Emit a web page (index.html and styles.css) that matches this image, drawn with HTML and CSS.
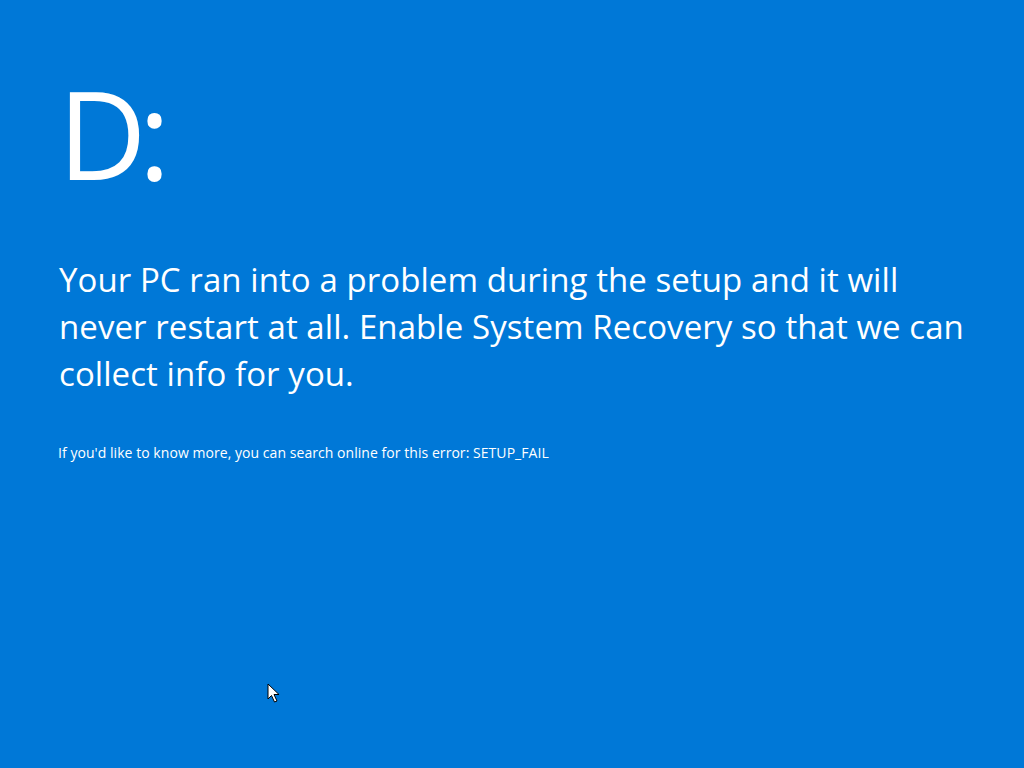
FILE: index.html
```html
<!DOCTYPE html>
<html>
<head>
<meta charset="utf-8">
<link rel="stylesheet" href="styles.css">
</head>
<body>
<main class="screen">
  <div class="face">D:</div>
  <p class="message">Your PC ran into a problem during the setup and it will never restart at all. Enable System Recovery so that we can collect info for you.</p>
  <p class="info">If you'd like to know more, you can search online for this error: SETUP_FAIL</p>
</main>
<svg class="cursor" width="14" height="20" viewBox="0 0 14 20"><path d="M1 1 L1 16 L4.5 12.5 L7.5 19 L10 18 L7 11.5 L12 11.5 Z" fill="#fff" stroke="#000" stroke-width="1" stroke-linejoin="round"/></svg>
</body>
</html>
```
FILE: styles.css
```css
html, body {
  margin: 0;
  height: 100%;
  background: #0078d7;
}
body {
  font-family: "Open Sans", "Noto Sans", sans-serif;
  color: #fff;
  overflow: hidden;
}
.screen {
  padding: 58px 0 0 58px;
}
.face {
  font-size: 122px;
  line-height: 150px;
  letter-spacing: -8px;
  padding-left: 0;
}
.message {
  margin: 48px 0 0 0;
  font-size: 33px;
  line-height: 47px;
  letter-spacing: 0.07px;
  width: 910px;
  padding-left: 1px;
}
.info {
  margin: 47px 0 0 0;
  font-size: 14px;
  line-height: 18px;
  letter-spacing: 0.05px;
}
.cursor {
  position: absolute;
  left: 267px;
  top: 683px;
}
```
